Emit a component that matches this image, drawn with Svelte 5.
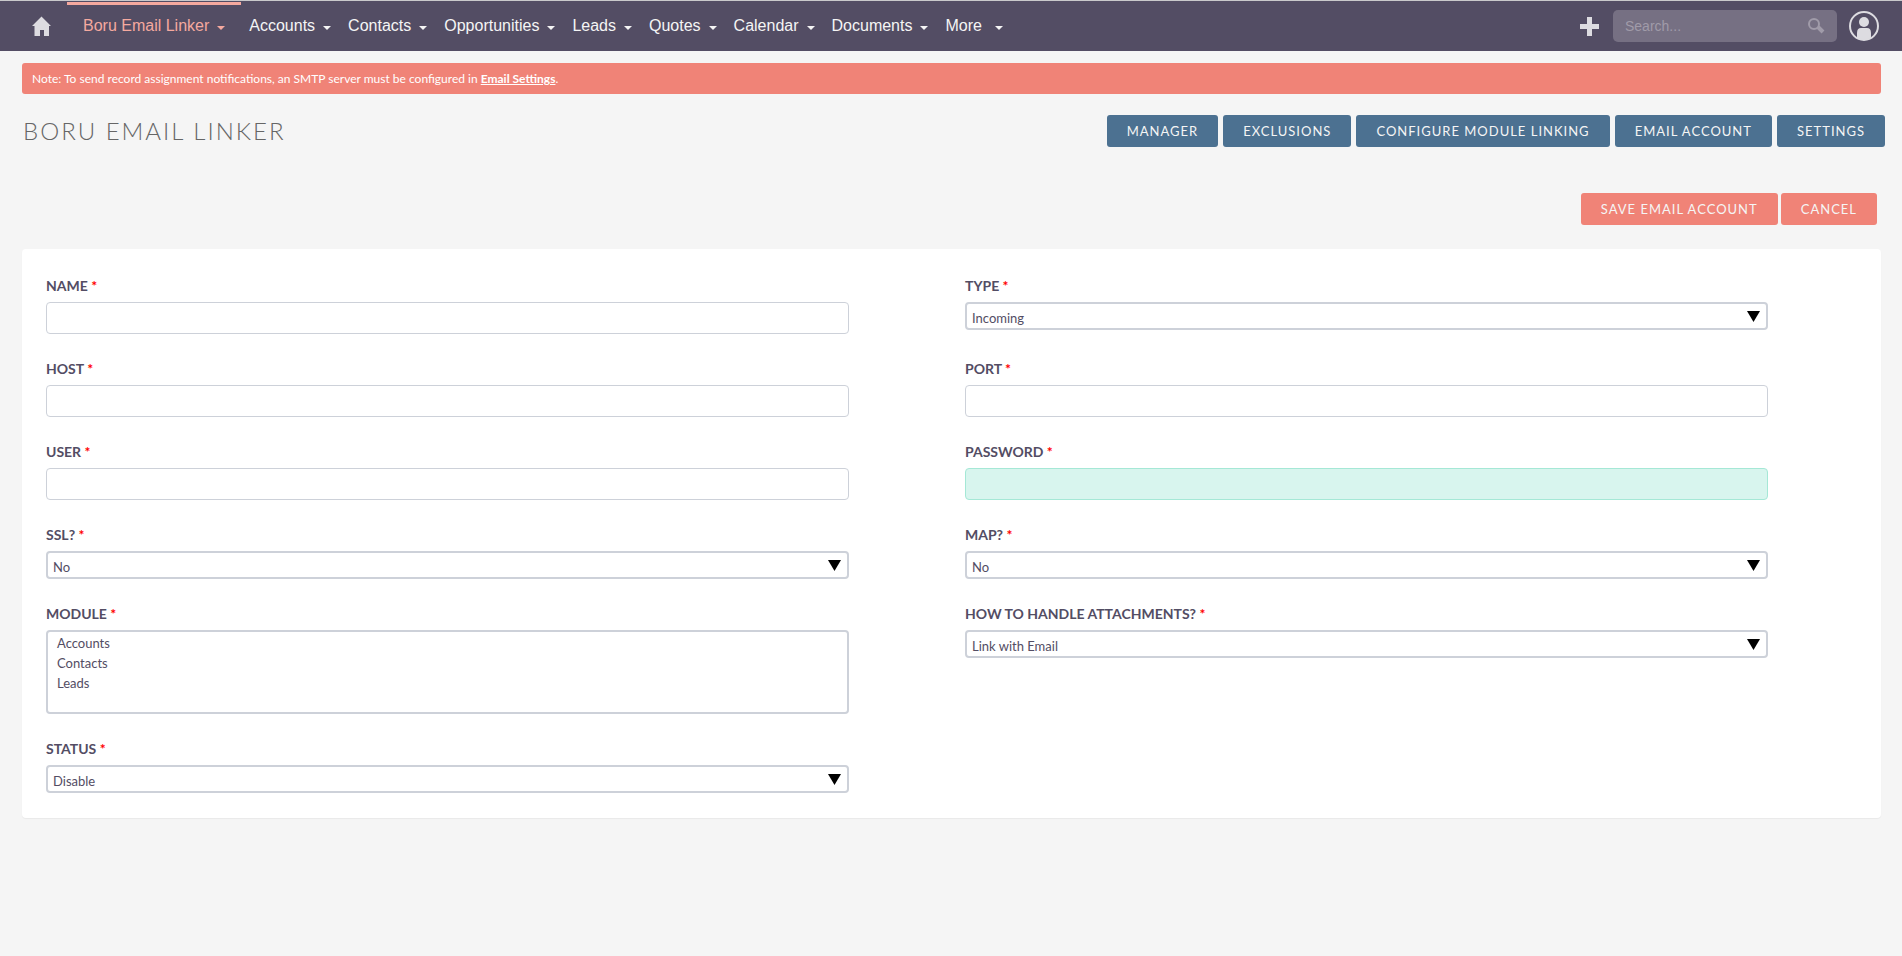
<script>
  const navItems = ['Accounts', 'Contacts', 'Opportunities', 'Leads', 'Quotes', 'Calendar', 'Documents', 'More'];

  const moduleButtons = ['Manager', 'Exclusions', 'Configure Module Linking', 'Email Account', 'Settings'];

  // listed row by row: left column, right column
  const fields = [
    { id: 'name', label: 'Name', type: 'text' },
    { id: 'type', label: 'Type', type: 'select', options: ['Incoming', 'Outgoing'] },
    { id: 'host', label: 'Host', type: 'text' },
    { id: 'port', label: 'Port', type: 'text' },
    { id: 'user', label: 'User', type: 'text' },
    { id: 'password', label: 'Password', type: 'password' },
    { id: 'ssl', label: 'SSL?', type: 'select', options: ['No', 'Yes'] },
    { id: 'map', label: 'Map?', type: 'select', options: ['No', 'Yes'] },
    { id: 'module', label: 'Module', type: 'multi', options: ['Accounts', 'Contacts', 'Leads'] },
    { id: 'attachments', label: 'How to handle attachments?', type: 'select', options: ['Link with Email'] },
    { id: 'status', label: 'Status', type: 'select', options: ['Disable', 'Enable'] },
  ];

  let search = '';
</script>

<nav class="navbar">
  <a class="home" href="#home" aria-label="Home">
    <svg width="20" height="20" viewBox="0 0 20 20">
      <path d="M9.5 0.5 L19 10 H17 V20 H12 V14 H8 V20 H2.5 V10 H0 Z" fill="#dddce1" />
    </svg>
  </a>
  <a class="nav-item active" href="#linker">Boru Email Linker<span class="caret"></span></a>
  {#each navItems as item}
    <a class="nav-item" class:more={item === 'More'} href="#{item.toLowerCase()}">{item}<span class="caret"></span></a>
  {/each}
  <div class="nav-right">
    <button class="icon-button" aria-label="Create">
      <svg width="19" height="19" viewBox="0 0 19 19">
        <path d="M7 0 H12 V7 H19 V12 H12 V19 H7 V12 H0 V7 H7 Z" fill="#dddce1" />
      </svg>
    </button>
    <form class="search" on:submit|preventDefault>
      <input type="text" aria-label="Search" placeholder="Search..." bind:value={search} />
      <button class="icon-button" aria-label="Search">
        <svg width="17" height="16" viewBox="0 0 17 16">
          <circle cx="6" cy="6" r="5" fill="none" stroke="#a09ba9" stroke-width="2" />
          <path d="M10 9 L15 14" fill="none" stroke="#a09ba9" stroke-width="4" />
        </svg>
      </button>
    </form>
    <button class="icon-button" aria-label="User menu">
      <svg width="30" height="30" viewBox="0 0 30 30">
        <circle cx="15" cy="15" r="14" fill="none" stroke="#dddce1" stroke-width="2" />
        <circle cx="15" cy="11" r="5" fill="#dddce1" />
        <path d="M8 27 V22 Q8 17 12 17 H18 Q22 17 22 22 V27 Q15 31 8 27 Z" fill="#dddce1" />
      </svg>
    </button>
  </div>
</nav>

<main>
  <div class="alert">
    Note: To send record assignment notifications, an SMTP server must be configured in <a href="#email-settings">Email Settings</a>.
  </div>

  <header class="module-header">
    <h2>Boru Email Linker</h2>
    <div class="module-buttons">
      {#each moduleButtons as label}
        <button class="button blue">{label}</button>
      {/each}
    </div>
  </header>

  <div class="actions">
    <button class="button" type="submit" form="account-form">Save Email Account</button>
    <button class="button">Cancel</button>
  </div>

  <form id="account-form" class="panel" on:submit|preventDefault>
    {#each fields as field}
      <div class="field">
        <label for={field.id}>{field.label} <span class="required">*</span></label>
        {#if field.type === 'select'}
          <select id={field.id}>
            {#each field.options as option}
              <option>{option}</option>
            {/each}
          </select>
        {:else if field.type === 'multi'}
          <select id={field.id} multiple>
            {#each field.options as option}
              <option>{option}</option>
            {/each}
          </select>
        {:else if field.type === 'password'}
          <input id={field.id} type="password" class="focused" />
        {:else}
          <input id={field.id} type="text" />
        {/if}
      </div>
    {/each}
  </form>
</main>

<style>
  :global(body) {
    margin: 0;
    background: #f5f5f5;
    font-family: Lato, sans-serif;
    color: #534d64;
  }

  button,
  input,
  select {
    box-sizing: border-box;
    margin: 0;
    font-family: inherit;
    color: inherit;
  }

  .navbar {
    display: flex;
    align-items: stretch;
    height: 50px;
    border-top: 1px solid #c9c9cb;
    background: #534d64;
    font-family: 'Liberation Sans', Arial, sans-serif;
  }

  .home {
    display: flex;
    align-items: center;
    padding: 0 15px 0 32px;
  }

  .nav-item {
    display: flex;
    align-items: center;
    gap: 8px;
    box-sizing: border-box;
    padding: 0 9px 4px 8px;
    border-top: 3px solid transparent;
    margin-top: 1px;
    font-size: 16px;
    color: #f5f5f5;
    text-decoration: none;
    white-space: nowrap;
  }

  .nav-item.active {
    padding: 0 16px 4px 16px;
    border-top-color: #f5a99f;
    color: #f5a99f;
  }

  .nav-item.more {
    gap: 13px;
  }

  .caret {
    margin-top: 3px;
    border-top: 4px solid currentColor;
    border-left: 4px solid transparent;
    border-right: 4px solid transparent;
  }

  .nav-right {
    display: flex;
    align-items: center;
    gap: 12px;
    margin-left: auto;
    padding: 0 23px 0 0;
  }

  .icon-button {
    display: flex;
    padding: 0;
    border: 0;
    background: none;
    cursor: pointer;
  }

  .nav-right > .icon-button:first-child {
    margin-right: 2px;
  }

  .search {
    display: flex;
    align-items: center;
    box-sizing: border-box;
    width: 224px;
    height: 32px;
    padding: 0 12px;
    border-radius: 5px;
    background: #767083;
  }

  .search input {
    flex: 1;
    min-width: 0;
    padding: 0;
    border: 0;
    background: none;
    font-size: 14px;
    color: #f5f5f5;
    outline: none;
  }

  .search input::placeholder {
    color: #a09ba9;
  }

  main {
    padding: 12px 21px 24px 22px;
  }

  .alert {
    padding: 0 10px;
    border-radius: 3px;
    background: #f08377;
    font-size: 12px;
    line-height: 31px;
    color: #fff;
  }

  .alert a {
    font-weight: bold;
    color: #fff;
  }

  .module-header {
    display: flex;
    justify-content: space-between;
    align-items: center;
    margin: 21px -4px 0 1px;
  }

  h2 {
    margin: 0;
    font-size: 24px;
    font-weight: 300;
    line-height: 32px;
    letter-spacing: 2px;
    text-transform: uppercase;
    color: #666;
  }

  .module-buttons {
    display: flex;
    gap: 5px;
  }

  .actions {
    display: flex;
    justify-content: flex-end;
    gap: 3px;
    margin: 46px 4px 24px 0;
  }

  .button {
    height: 32px;
    padding: 0 20px;
    border: 0;
    border-radius: 3px;
    background: #f08377;
    font-size: 13px;
    letter-spacing: 1px;
    text-transform: uppercase;
    color: #f5f5f5;
    cursor: pointer;
  }

  .button.blue {
    background: #4c7191;
  }

  .panel {
    display: grid;
    grid-template-columns: 1fr 1fr;
    gap: 25px 116px;
    align-items: start;
    padding: 27px 113px 25px 24px;
    border-radius: 4px;
    background: #fff;
    box-shadow: 0 1px 1px rgba(0, 0, 0, 0.05);
  }

  .field {
    display: flex;
    flex-direction: column;
  }

  label {
    margin-bottom: 6px;
    font-size: 14px;
    font-weight: bold;
    line-height: 20px;
    text-transform: uppercase;
  }

  .required {
    color: #f00;
  }

  .field input {
    width: 100%;
    height: 32px;
    padding: 0 8px;
    border: 1px solid #cdd1d9;
    border-radius: 4px;
    background: #fff;
    font-size: 13px;
    outline: none;
  }

  .field input.focused {
    border-color: #a5e8d6;
    background: #d8f5ee;
  }

  select {
    appearance: none;
    width: 100%;
    height: 28px;
    padding: 4px 24px 0 5px;
    border: 2px solid #cdd1d9;
    border-radius: 4px;
    background: #fff url("data:image/svg+xml,%3Csvg xmlns='http://www.w3.org/2000/svg' width='13' height='11'%3E%3Cpath d='M0 0H13L6.5 11Z'/%3E%3C/svg%3E") no-repeat right 6px top 7px;
    font-size: 13px;
  }

  select[multiple] {
    height: 84px;
    padding: 3px 7px;
    background: #fff;
    overflow: hidden;
  }

  select[multiple] option {
    min-height: 20px;
    padding: 0 2px;
    line-height: 20px;
  }
</style>
